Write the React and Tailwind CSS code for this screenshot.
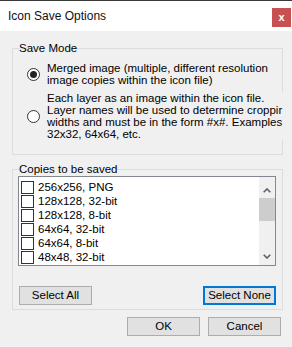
import React, { useState } from 'react';

const copies = [
  '256x256, PNG',
  '128x128, 32-bit',
  '128x128, 8-bit',
  '64x64, 32-bit',
  '64x64, 8-bit',
  '48x48, 32-bit',
];

const Radio = ({ checked }) => (
  <span className="flex-none w-[13px] h-[13px] rounded-full border border-[#333] bg-white flex items-center justify-center">
    {checked && <span className="w-[7px] h-[7px] rounded-full bg-[#222]" />}
  </span>
);

const Chevron = ({ down }) => (
  <svg width="8" height="5" viewBox="0 0 8 5" className="block">
    <polyline
      points={down ? '0.7,0.7 4,4 7.3,0.7' : '0.7,4.3 4,1 7.3,4.3'}
      fill="none"
      stroke="#606060"
      strokeWidth="1.6"
    />
  </svg>
);

const WinButton = ({ children, focused, className = '' }) => (
  <button
    className={`w-[73px] h-[19px] flex-none flex items-center justify-center bg-[#e1e1e1] text-[11.5px] leading-none text-black ${
      focused ? 'border-2 border-[#0078d7]' : 'border border-[#adadad]'
    } ${className}`}
  >
    {children}
  </button>
);

const App = () => {
  const [mode, setMode] = useState('merged');

  return (
    <div className="w-[292px] h-[347px] bg-[#f0f0f0] flex flex-col overflow-hidden font-['Liberation_Sans',Arial,sans-serif] text-black select-none">
      {/* title bar */}
      <div className="h-[31px] flex-none bg-white border-t border-[#3a3a3a] flex items-start justify-between pt-[7px] pl-[8px] pr-[1px]">
        <span className="mt-[1px] text-[12px] leading-[14px] text-[#111]">Icon Save Options</span>
        <div className="w-[19px] h-[19px] bg-[#c75050] flex items-center justify-center text-white text-[11px] font-bold leading-none pb-[1px]">
          x
        </div>
      </div>

      <div className="flex flex-col pl-[12px] pr-[10px]">
        {/* save mode */}
        <fieldset className="mt-[11px] w-[271px] border border-[#dcdcdc] pt-[8px] pb-[14px] flex flex-col gap-[6px]">
          <legend className="ml-[6px] text-[11.5px] leading-[12px]">Save Mode</legend>

          <div className="flex items-center pl-[14px]" onClick={() => setMode('merged')}>
            <Radio checked={mode === 'merged'} />
            <div className="ml-[7px] text-[11.5px] leading-[12px] whitespace-nowrap">
              <div>Merged image (multiple, different resolution</div>
              <div>image copies within the icon file)</div>
            </div>
          </div>

          <div className="flex items-center pl-[14px]" onClick={() => setMode('layers')}>
            <Radio checked={mode === 'layers'} />
            <div className="ml-[7px] w-[236px] -mr-[2px] bg-[#f0f0f0] overflow-hidden text-[11.5px] leading-[12px] whitespace-nowrap">
              <div>Each layer as an image within the icon file.</div>
              <div>Layer names will be used to determine croppir</div>
              <div>widths and must be in the form #x#. Examples</div>
              <div>32x32, 64x64, etc.</div>
            </div>
          </div>
        </fieldset>

        {/* copies */}
        <fieldset className="mt-[8px] w-[271px] border border-[#dcdcdc] pt-[1px] pb-[4px] pl-[5px] pr-[6px] flex flex-col">
          <legend className="ml-[1px] text-[11.5px] leading-[12px]">Copies to be saved</legend>

          <div className="w-[258px] h-[90px] border border-[#828790] bg-white flex">
            <div className="flex-1 overflow-hidden pt-[3px] pl-[2px]">
              {copies.map((c) => (
                <div key={c} className="h-[14px] flex items-start">
                  <span className="mt-[1px] flex-none w-[13px] h-[13px] border border-[#333] bg-white" />
                  <span className="ml-[4px] text-[11.5px] leading-[14px] whitespace-nowrap">{c}</span>
                </div>
              ))}
            </div>
            <div className="w-[16px] flex-none bg-[#f0f0f0] flex flex-col">
              <div className="h-[21px] flex items-end justify-center pb-[5px]">
                <Chevron />
              </div>
              <div className="h-[23px] bg-[#cdcdcd]" />
              <div className="flex-1" />
              <div className="h-[17px] flex items-center justify-center">
                <Chevron down />
              </div>
            </div>
          </div>

          <div className="mt-[20px] flex justify-between pl-[1px]">
            <WinButton>Select All</WinButton>
            <WinButton focused>Select None</WinButton>
          </div>
        </fieldset>

        <div className="mt-[7px] flex justify-end gap-[8px] pr-[1px]">
          <WinButton>OK</WinButton>
          <WinButton>Cancel</WinButton>
        </div>
      </div>
    </div>
  );
};

export default App;
